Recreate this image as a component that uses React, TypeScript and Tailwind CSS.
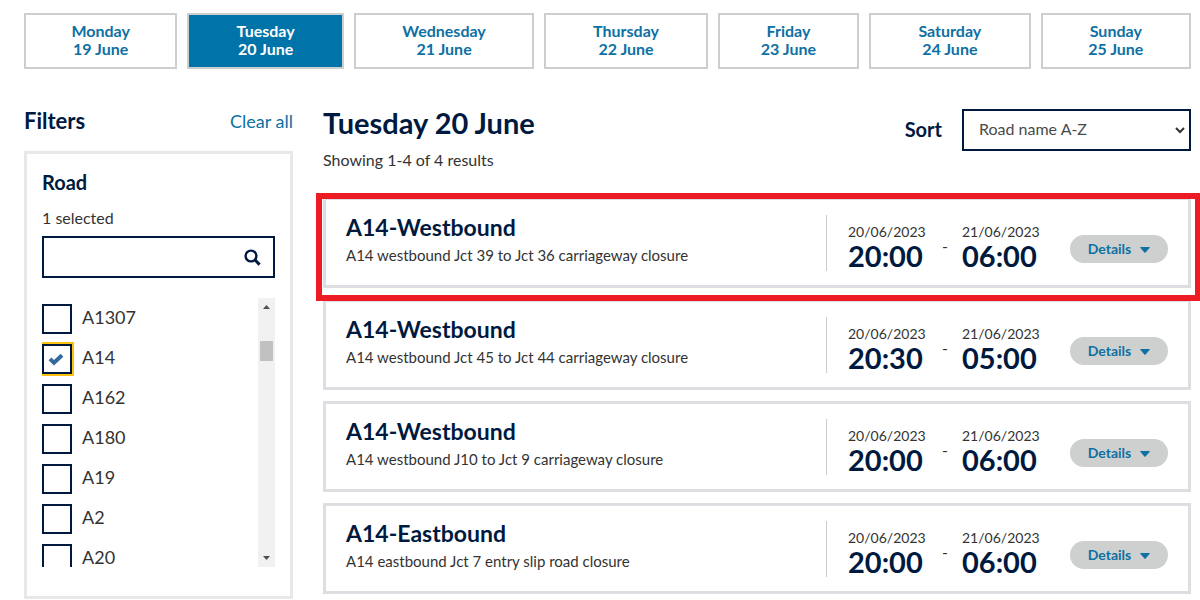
import { useState } from "react";

const days = [
  ["Monday", "19 June"],
  ["Tuesday", "20 June"],
  ["Wednesday", "21 June"],
  ["Thursday", "22 June"],
  ["Friday", "23 June"],
  ["Saturday", "24 June"],
  ["Sunday", "25 June"],
];

const roads = ["A1307", "A14", "A162", "A180", "A19", "A2", "A20"];

type Closure = { road: string; text: string; start: string; end: string; highlighted?: boolean };

const closures: Closure[] = [
  { road: "A14-Westbound", text: "A14 westbound Jct 39 to Jct 36 carriageway closure", start: "20:00", end: "06:00", highlighted: true },
  { road: "A14-Westbound", text: "A14 westbound Jct 45 to Jct 44 carriageway closure", start: "20:30", end: "05:00" },
  { road: "A14-Westbound", text: "A14 westbound J10 to Jct 9 carriageway closure", start: "20:00", end: "06:00" },
  { road: "A14-Eastbound", text: "A14 eastbound Jct 7 entry slip road closure", start: "20:00", end: "06:00" },
];

function DayTabs() {
  return (
    <nav className="grid grid-cols-[153fr_156fr_180fr_163fr_141fr_161fr_150fr] gap-[10px]">
      {days.map(([day, date], i) => (
        <button
          key={day}
          type="button"
          className={
            i === 1
              ? "h-14 border-2 border-[#cccfd0] bg-[#0073a8] pb-[2px] text-base leading-[18px] font-bold text-white"
              : "h-14 border-2 border-[#cccfd0] bg-white pb-[2px] text-base leading-[18px] font-bold text-[#0e70a3]"
          }
        >
          {day}
          <br />
          {date}
        </button>
      ))}
    </nav>
  );
}

function RoadOption({ name, checked, onChange }: { name: string; checked: boolean; onChange: () => void }) {
  return (
    <label className="flex h-10 shrink-0 items-center gap-[10px] text-[18px] text-[#333]">
      <span className="relative flex h-[30px] w-[30px]">
        <input
          type="checkbox"
          checked={checked}
          onChange={onChange}
          className="h-[30px] w-[30px] appearance-none border-2 border-[#001a3f] bg-white checked:shadow-[0_-2px_#fdc20f,0_2px_#fdc20f,2px_-2px_#fdc20f,2px_2px_#fdc20f]"
        />
        {checked && (
          <svg viewBox="0 0 16 13" className="pointer-events-none absolute top-[9px] left-[6px] h-[13px] w-4">
            <path d="M2 5.8 L6 9.8 L14 2.2" fill="none" stroke="#33699c" strokeWidth="4" />
          </svg>
        )}
      </span>
      <span className="pb-1">{name}</span>
    </label>
  );
}

function Filters() {
  const [selected, setSelected] = useState<string[]>(["A14"]);
  const toggle = (name: string) =>
    setSelected((s) => (s.includes(name) ? s.filter((n) => n !== name) : [...s, name]));

  return (
    <aside className="w-[269px] shrink-0">
      <div className="flex h-[27px] items-center justify-between">
        <h2 className="pb-[2px] text-[22px] font-bold text-[#001a3f]">Filters</h2>
        <a href="#clear" className="text-[18px] text-[#0e70a3]">Clear all</a>
      </div>
      <section className="mt-4 border-3 border-[#e8e8e8] px-[15px] pt-[14px] pb-[29px]">
        <h3 className="text-[20px] leading-7 font-bold text-[#001a3f]">Road</h3>
        <label htmlFor="road-search" className="mt-3 block text-base leading-5 text-[#333]">
          {selected.length} selected
        </label>
        <div className="mt-2 flex h-[42px] items-center border-2 border-[#001a3f] pr-3">
          <input id="road-search" type="text" className="h-full min-w-0 flex-1 px-3 text-base outline-none" />
          <button type="button" aria-label="Search" className="text-[#001a3f]">
            <svg viewBox="0 0 17 17" className="h-[17px] w-[17px]">
              <circle cx="7" cy="7" r="5.4" fill="none" stroke="currentColor" strokeWidth="2.4" />
              <path d="M10.8 10.8 L15.6 15.6" stroke="currentColor" strokeWidth="3" />
            </svg>
          </button>
        </div>
        <div className="mt-5 flex h-[269px] justify-between">
          <div className="flex flex-1 flex-col overflow-hidden pt-px pr-1">
            {roads.map((name) => (
              <RoadOption key={name} name={name} checked={selected.includes(name)} onChange={() => toggle(name)} />
            ))}
          </div>
          <div className="flex w-[17px] flex-col items-center justify-between bg-[#f1f1f1] py-[7px]">
            <svg viewBox="0 0 7 4" className="h-1 w-[7px]"><path d="M0 4 L3.5 0 L7 4Z" fill="#505050" /></svg>
            <div className="mt-8 mb-auto h-5 w-[13px] bg-[#c1c1c1]" />
            <svg viewBox="0 0 7 4" className="h-1 w-[7px]"><path d="M0 0 L3.5 4 L7 0Z" fill="#505050" /></svg>
          </div>
        </div>
      </section>
    </aside>
  );
}

function Moment({ date, time }: { date: string; time: string }) {
  return (
    <div className="w-20">
      <div className="text-[14px] leading-5 text-[#333]">{date}</div>
      <div className="text-[29px] leading-7 font-bold text-[#001a3f]">{time}</div>
    </div>
  );
}

function ClosureCard({ closure }: { closure: Closure }) {
  return (
    <li className="relative flex h-[91px] items-center border-3 border-[#dddde2] px-5">
      <div className="min-w-0 flex-1 pb-2">
        <h3 className="text-[23px] leading-7 font-bold text-[#001a3f]">{closure.road}</h3>
        <p className="mt-1 text-[15px] leading-5 text-[#333]">{closure.text}</p>
      </div>
      <div className="flex h-14 items-center border-l border-[#ccc] pt-[6px] pl-[21px]">
        <Moment date="20/06/2023" time={closure.start} />
        <span className="w-[34px] text-center text-base text-[#333]">-</span>
        <Moment date="21/06/2023" time={closure.end} />
      </div>
      <div className="ml-7 pt-3">
        <button
          type="button"
          className="flex h-7 w-[98px] items-center justify-center gap-[9px] rounded-full bg-[#cdd0cf] text-sm font-bold text-[#0e70a3]"
        >
          Details
          <svg viewBox="0 0 10 6" className="mt-[2px] h-[6px] w-[10px]">
            <path d="M0.8 0H9.2Q10.2 0.3 9.5 1.1L5.6 5.4Q5 6 4.4 5.4L0.5 1.1Q-0.2 0.3 0.8 0Z" fill="currentColor" />
          </svg>
        </button>
      </div>
      {closure.highlighted && (
        <div className="pointer-events-none absolute -top-[7px] -right-[13px] -bottom-4 -left-[10px] z-10 border-6 border-[#ed1c24]" />
      )}
    </li>
  );
}

export default function App() {
  return (
    <div className="overflow-x-hidden bg-white pt-[13px] pr-[9px] pl-6 font-['Lato',sans-serif]">
      <DayTabs />
      <main className="mt-[39px] flex items-start gap-[30px]">
        <Filters />
        <section className="min-w-0 flex-1">
          <div className="flex justify-between">
            <div>
              <h1 className="text-[29px] leading-[30px] font-bold text-[#001a3f]">Tuesday 20 June</h1>
              <p className="mt-3 text-base leading-5 text-[#333]">Showing 1-4 of 4 results</p>
            </div>
            <div className="mt-px flex h-[42px] items-center gap-5">
              <label htmlFor="sort" className="pb-[3px] text-[20px] font-bold text-[#001a3f]">Sort</label>
              <div className="relative">
                <select
                  id="sort"
                  className="h-[42px] w-[229px] appearance-none border-2 border-[#001a3f] bg-white pb-[2px] pl-[15px] text-base text-[#4a4a4a]"
                >
                  <option>Road name A-Z</option>
                  <option>Road name Z-A</option>
                </select>
                <svg viewBox="0 0 10 7" className="pointer-events-none absolute top-[18px] right-[6px] h-[7px] w-[10px]">
                  <path d="M1 1 L5 5 L9 1" fill="none" stroke="#333" strokeWidth="2" />
                </svg>
              </div>
            </div>
          </div>
          <ul className="mt-[27px] flex flex-col gap-[11px]">
            {closures.map((c, i) => (
              <ClosureCard key={i} closure={c} />
            ))}
          </ul>
        </section>
      </main>
    </div>
  );
}
